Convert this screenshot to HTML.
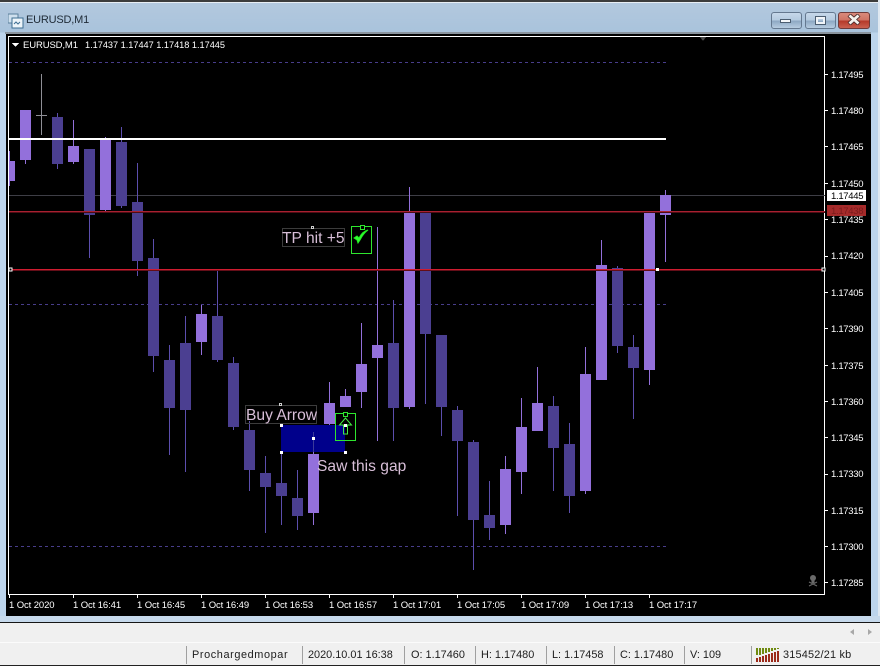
<!DOCTYPE html>
<html><head><meta charset="utf-8"><style>
html,body{margin:0;padding:0;background:#f0f0f0}
#w{position:relative;width:880px;height:666px;overflow:hidden;background:#f0f0f0;font-family:"Liberation Sans",sans-serif}
.a{position:absolute}
.sep{position:absolute;top:646px;height:18px;width:1px;background:#a0a0a0}
.st{position:absolute;top:648px;font-size:10.9px;line-height:14px;color:#1c1c1c;white-space:nowrap}
.btn{position:absolute;top:12px;height:15px;border:1px solid #64788f;border-radius:3px;box-sizing:content-box}
.d rect[width="1"]{fill:#5c4eae}
</style></head><body><div id="w">
<div class="a" style="left:0;top:0;width:880px;height:622px;background:linear-gradient(#b4c9de 0,#a9c3dc 32px,#bcd4ec 33px,#bcd4ec 100%)"></div>
<div class="a" style="left:0;top:0;width:880px;height:2px;background:#3c3c3c"></div>
<div class="a" style="left:0;top:2px;width:880px;height:1px;background:#e8eef4"></div>
<div class="a" style="left:878px;top:0;width:2px;height:622px;background:#dfe8f1"></div>
<div class="a" style="left:5px;top:32px;width:866px;height:2px;background:#8a949e"></div>
<svg class="a" style="left:8px;top:13px" width="16" height="16" viewBox="0 0 16 16"><rect x="0" y="1" width="10" height="9" fill="#cfe0ee" stroke="#5a7f9c"/><rect x="4" y="5" width="11" height="10" fill="#eef5fa" stroke="#3f6f93"/><path d="M6 11l2-2 2 2 2-2" fill="none" stroke="#3f6f93"/></svg>
<div class="a" style="left:26px;top:13px;font-size:11px;line-height:15px;letter-spacing:-.2px;color:#1e2a36">EURUSD,M1</div>

<div class="btn" style="left:771px;width:29px;background:linear-gradient(#c6d8ea 0,#b5cbe0 45%,#8fa9c4 55%,#b7cce0 100%)"></div>
<div class="a" style="left:780px;top:19px;width:9px;height:2px;background:#f4f7fa;border:1px solid #4b5d70"></div>
<div class="btn" style="left:805px;width:29px;background:linear-gradient(#c6d8ea 0,#b5cbe0 45%,#8fa9c4 55%,#b7cce0 100%)"></div>
<div class="a" style="left:816px;top:17px;width:5px;height:3px;border:2px solid #f0f4f8;outline:1px solid #4b5d70"></div>
<div class="btn" style="left:838px;width:30px;background:linear-gradient(#d98a7c 0,#cf7465 45%,#b63a2a 55%,#c9604f 100%);border-color:#6e3a3a"></div>
<svg class="a" style="left:847px;top:14px" width="14" height="11" viewBox="0 0 14 11"><path d="M2 1l10 9M12 1L2 10" stroke="#4a2a2a" stroke-width="4.4"/><path d="M2.500 1.500l9 8M11.500 1.500l-9 8" stroke="#f6f2ee" stroke-width="2.800"/></svg>

<div class="a" style="left:6px;top:34px;width:865px;height:582px;background:#000"></div>

<svg class="a" style="left:0;top:0" width="880" height="666" viewBox="0 0 880 666" shape-rendering="crispEdges" font-family="'Liberation Sans',sans-serif">
<rect x="8.5" y="36.5" width="816" height="558" fill="#000" stroke="#fff"/>
<g stroke="#483d8b" stroke-dasharray="3 3">
<path d="M9 62.500H666M9 304.500H666M9 546.500H666"/>
</g>
<rect x="9" y="195" width="816" height="1" fill="#3e3e46"/>
<g class="d" fill="#4b3f91">
<rect x="57" y="113" width="1" height="56"/><rect x="52" y="117" width="11" height="47"/>
<rect x="89" y="149" width="1" height="109"/><rect x="84" y="149" width="11" height="66"/>
<rect x="121" y="127" width="1" height="81"/><rect x="116" y="142" width="11" height="64"/>
<rect x="137" y="163" width="1" height="113"/><rect x="132" y="202" width="11" height="59"/>
<rect x="153" y="239" width="1" height="133"/><rect x="148" y="258" width="11" height="98"/>
<rect x="169" y="345" width="1" height="110"/><rect x="164" y="360" width="11" height="48"/>
<rect x="185" y="316" width="1" height="156"/><rect x="180" y="343" width="11" height="67"/>
<rect x="217" y="269" width="1" height="93"/><rect x="212" y="316" width="11" height="44"/>
<rect x="233" y="357" width="1" height="73"/><rect x="228" y="363" width="11" height="64"/>
<rect x="249" y="421" width="1" height="70"/><rect x="244" y="430" width="11" height="40"/>
<rect x="265" y="456" width="1" height="77"/><rect x="260" y="473" width="11" height="14"/>
<rect x="281" y="452" width="1" height="73"/><rect x="276" y="483" width="11" height="13"/>
<rect x="297" y="470" width="1" height="60"/><rect x="292" y="498" width="11" height="18"/>
<rect x="393" y="300" width="1" height="141"/><rect x="388" y="343" width="11" height="65"/>
<rect x="425" y="212" width="1" height="192"/><rect x="420" y="212" width="11" height="122"/>
<rect x="441" y="335" width="1" height="101"/><rect x="436" y="335" width="11" height="72"/>
<rect x="457" y="406" width="1" height="110"/><rect x="452" y="410" width="11" height="31"/>
<rect x="473" y="440" width="1" height="130"/><rect x="468" y="442" width="11" height="78"/>
<rect x="489" y="481" width="1" height="59"/><rect x="484" y="515" width="11" height="13"/>
<rect x="553" y="396" width="1" height="95"/><rect x="548" y="406" width="11" height="42"/>
<rect x="569" y="423" width="1" height="90"/><rect x="564" y="444" width="11" height="52"/>
<rect x="617" y="266" width="1" height="87"/><rect x="612" y="268" width="11" height="78"/>
<rect x="633" y="335" width="1" height="84"/><rect x="628" y="347" width="11" height="21"/>
</g>
<g fill="#9370db">
<rect x="9" y="151" width="1" height="35"/><rect x="9" y="161" width="6" height="20"/>
<rect x="25" y="110" width="1" height="54"/><rect x="20" y="110" width="11" height="50"/>
<rect x="73" y="120" width="1" height="44"/><rect x="68" y="146" width="11" height="16"/>
<rect x="105" y="137" width="1" height="76"/><rect x="100" y="139" width="11" height="71"/>
<rect x="201" y="305" width="1" height="50"/><rect x="196" y="314" width="11" height="28"/>
<rect x="313" y="452" width="1" height="73"/><rect x="308" y="454" width="11" height="59"/>
<rect x="329" y="382" width="1" height="44"/><rect x="324" y="403" width="11" height="21"/>
<rect x="345" y="389" width="1" height="18"/><rect x="340" y="396" width="11" height="11"/>
<rect x="361" y="323" width="1" height="85"/><rect x="356" y="364" width="11" height="28"/>
<rect x="377" y="227" width="1" height="214"/><rect x="372" y="345" width="11" height="13"/>
<rect x="409" y="187" width="1" height="222"/><rect x="404" y="212" width="11" height="195"/>
<rect x="505" y="456" width="1" height="78"/><rect x="500" y="469" width="11" height="56"/>
<rect x="521" y="398" width="1" height="96"/><rect x="516" y="427" width="11" height="45"/>
<rect x="537" y="367" width="1" height="64"/><rect x="532" y="403" width="11" height="28"/>
<rect x="585" y="347" width="1" height="147"/><rect x="580" y="374" width="11" height="117"/>
<rect x="601" y="240" width="1" height="140"/><rect x="596" y="265" width="11" height="115"/>
<rect x="649" y="212" width="1" height="173"/><rect x="644" y="212" width="11" height="158"/>
<rect x="665" y="190" width="1" height="72"/><rect x="660" y="195" width="11" height="20"/>
</g>
<rect x="41" y="74" width="1" height="61" fill="#8f8f96"/><rect x="36" y="115" width="11" height="1" fill="#8f8f96"/>
<rect x="9" y="138" width="657" height="2" fill="#fff"/>
<rect x="9" y="211" width="816" height="1" fill="#a82030"/>
<rect x="9" y="212" width="816" height="1" fill="#4e0c14"/>
<rect x="9" y="269" width="816" height="1" fill="#d01c30"/>
<rect x="9" y="270" width="816" height="1" fill="#640e18"/>
<rect x="9" y="268" width="3" height="3" fill="#000" stroke="#fff"/>
<rect x="822" y="268" width="3" height="3" fill="#000" stroke="#fff"/>
<rect x="656" y="268" width="3" height="3" fill="#fff"/>
<rect x="281" y="425" width="64" height="27" fill="#00008b"/>
<rect x="313" y="432" width="1" height="20" fill="#3a3a9a"/>
<g fill="#fff"><rect x="280" y="424" width="3" height="3"/><rect x="280" y="451" width="3" height="3"/><rect x="344" y="451" width="3" height="3"/><rect x="312" y="437" width="3" height="3"/></g>
<rect x="282.500" y="228.500" width="62" height="18" fill="none" stroke="#3c3c3c"/>
<rect x="311.500" y="226.500" width="2" height="2" fill="#000" stroke="#ccc"/>
<rect x="245.500" y="405.500" width="71" height="18" fill="none" stroke="#3c3c3c"/>
<rect x="279.500" y="403.500" width="2" height="2" fill="#000" stroke="#ccc"/>
<g style="shape-rendering:auto" fill="#d8bfd8" font-size="15.600">
<text x="282" y="243">TP hit +5</text>
<text x="246" y="420">Buy Arrow</text>
<text x="317" y="471">Saw this gap</text>
</g>
<rect x="351.500" y="226.500" width="20" height="27" fill="none" stroke="#2ee62e"/>
<rect x="360.500" y="225.500" width="4" height="4" fill="#000" stroke="#2ee62e"/>
<path d="M354 238l3 2 1 3 2-3c2-4 4-7 8-10-4 1-7 4-9 8l-2-2z" fill="#33ff33" stroke="#22ee22" style="shape-rendering:auto"/>
<rect x="335.500" y="413.500" width="20" height="27" fill="none" stroke="#2ee62e"/>
<path d="M345.500 418l-6 7h4v9h4v-9h4z" fill="none" stroke="#44ee44" style="shape-rendering:auto"/>
<rect x="343.500" y="412.500" width="4" height="4" fill="#000" stroke="#2ee62e"/>
<rect x="344" y="424" width="3" height="3" fill="#fff"/>
<path stroke="#fff" d="M825 74.500h3M825 110.500h3M825 146.500h3M825 183.500h3M825 219.500h3M825 256.500h3M825 292.500h3M825 328.500h3M825 365.500h3M825 401.500h3M825 437.500h3M825 474.500h3M825 510.500h3M825 546.500h3M825 582.500h3"/>
<path stroke="#fff" d="M9.500 595v3M73.500 595v3M137.500 595v3M201.500 595v3M265.500 595v3M329.500 595v3M393.500 595v3M457.500 595v3M521.500 595v3M585.500 595v3M649.500 595v3"/>
<g fill="#fff" font-size="9.500" letter-spacing="-.3" style="shape-rendering:auto">
<text x="831" y="78">1.17495</text>
<text x="831" y="114">1.17480</text>
<text x="831" y="150">1.17465</text>
<text x="831" y="187">1.17450</text>
<text x="831" y="223">1.17435</text>
<text x="831" y="259">1.17420</text>
<text x="831" y="296">1.17405</text>
<text x="831" y="332">1.17390</text>
<text x="831" y="369">1.17375</text>
<text x="831" y="405">1.17360</text>
<text x="831" y="441">1.17345</text>
<text x="831" y="477">1.17330</text>
<text x="831" y="514">1.17315</text>
<text x="831" y="550">1.17300</text>
<text x="831" y="586">1.17285</text>
</g>
<g fill="#fff" font-size="9.500" letter-spacing="-.1" style="shape-rendering:auto">
<text x="9" y="608">1 Oct 2020</text>
<text x="73" y="608">1 Oct 16:41</text>
<text x="137" y="608">1 Oct 16:45</text>
<text x="201" y="608">1 Oct 16:49</text>
<text x="265" y="608">1 Oct 16:53</text>
<text x="329" y="608">1 Oct 16:57</text>
<text x="393" y="608">1 Oct 17:01</text>
<text x="457" y="608">1 Oct 17:05</text>
<text x="521" y="608">1 Oct 17:09</text>
<text x="585" y="608">1 Oct 17:13</text>
<text x="649" y="608">1 Oct 17:17</text>
</g>
<rect x="827" y="190" width="39" height="11" fill="#fff"/>
<text x="831" y="199" fill="#000" font-size="9.500" letter-spacing="-.3" style="shape-rendering:auto">1.17445</text>
<rect x="827" y="205" width="39" height="11" fill="#a52a2a"/>
<text x="831" y="214" fill="#7a1c1c" font-size="9.500" letter-spacing="-.3" style="shape-rendering:auto">1.17438</text>
<path d="M12 43h7l-3.500 4z" fill="#fff"/>
<text x="23" y="48" fill="#fff" font-size="9.500" textLength="55" style="shape-rendering:auto">EURUSD,M1</text>
<text x="85" y="48" fill="#fff" font-size="9.200" textLength="140" style="shape-rendering:auto">1.17437 1.17447 1.17418 1.17445</text>
<g fill="#6a6a6a" style="shape-rendering:auto"><circle cx="813" cy="578" r="3"/><rect x="811.500" y="580" width="3" height="3"/></g>
<path d="M809 582l8 4M817 582l-8 4" stroke="#6a6a6a" style="shape-rendering:auto"/>
<path d="M700 37h6l-3 4z" fill="#4a4a4a"/>
</svg>

<div class="a" style="left:0;top:616px;width:880px;height:6px;background:#c6d9ec"></div>
<div class="a" style="left:0;top:622px;width:880px;height:1px;background:#161616"></div>
<div class="a" style="left:0;top:623px;width:880px;height:42px;background:#f0f0f0"></div>
<div class="a" style="left:0;top:642px;width:880px;height:1px;background:#fbfbfb"></div>
<div class="a" style="left:0;top:665px;width:880px;height:1px;background:#222"></div>
<svg class="a" style="left:848px;top:627px" width="26" height="10"><path d="M6 2v6L2 5zM20 2v6l4-3z" fill="#a8a8a8"/></svg>

<div class="sep" style="left:186px"></div><div class="st" style="left:192px;letter-spacing:.6px">Prochargedmopar</div>
<div class="sep" style="left:302px"></div><div class="st" style="left:308px">2020.10.01 16:38</div>
<div class="sep" style="left:404px"></div><div class="st" style="left:411px">O: 1.17460</div>
<div class="sep" style="left:475px"></div><div class="st" style="left:481px">H: 1.17480</div>
<div class="sep" style="left:546px"></div><div class="st" style="left:552px">L: 1.17458</div>
<div class="sep" style="left:614px"></div><div class="st" style="left:620px">C: 1.17480</div>
<div class="sep" style="left:684px"></div><div class="st" style="left:690px">V: 109</div>
<div class="sep" style="left:751px"></div>
<svg class="a" style="left:756px;top:648px" width="24" height="14" shape-rendering="crispEdges"><g fill="#6f8a10"><rect x="0" y="0" width="2" height="7"/><rect x="3" y="0" width="2" height="7"/><rect x="6" y="0" width="2" height="6"/><rect x="9" y="0" width="2" height="5"/><rect x="12" y="0" width="2" height="4"/><rect x="15" y="0" width="2" height="3"/><rect x="18" y="0" width="2" height="2"/><rect x="21" y="0" width="2" height="1"/></g><g fill="#9c2a1a"><rect x="0" y="10" width="2" height="4"/><rect x="3" y="9" width="2" height="5"/><rect x="6" y="8" width="2" height="6"/><rect x="9" y="7" width="2" height="7"/><rect x="12" y="6" width="2" height="8"/><rect x="15" y="5" width="2" height="9"/><rect x="18" y="4" width="2" height="10"/><rect x="21" y="3" width="2" height="11"/></g></svg>
<div class="st" style="left:783px;letter-spacing:.2px">315452/21 kb</div>
</div></body></html>
